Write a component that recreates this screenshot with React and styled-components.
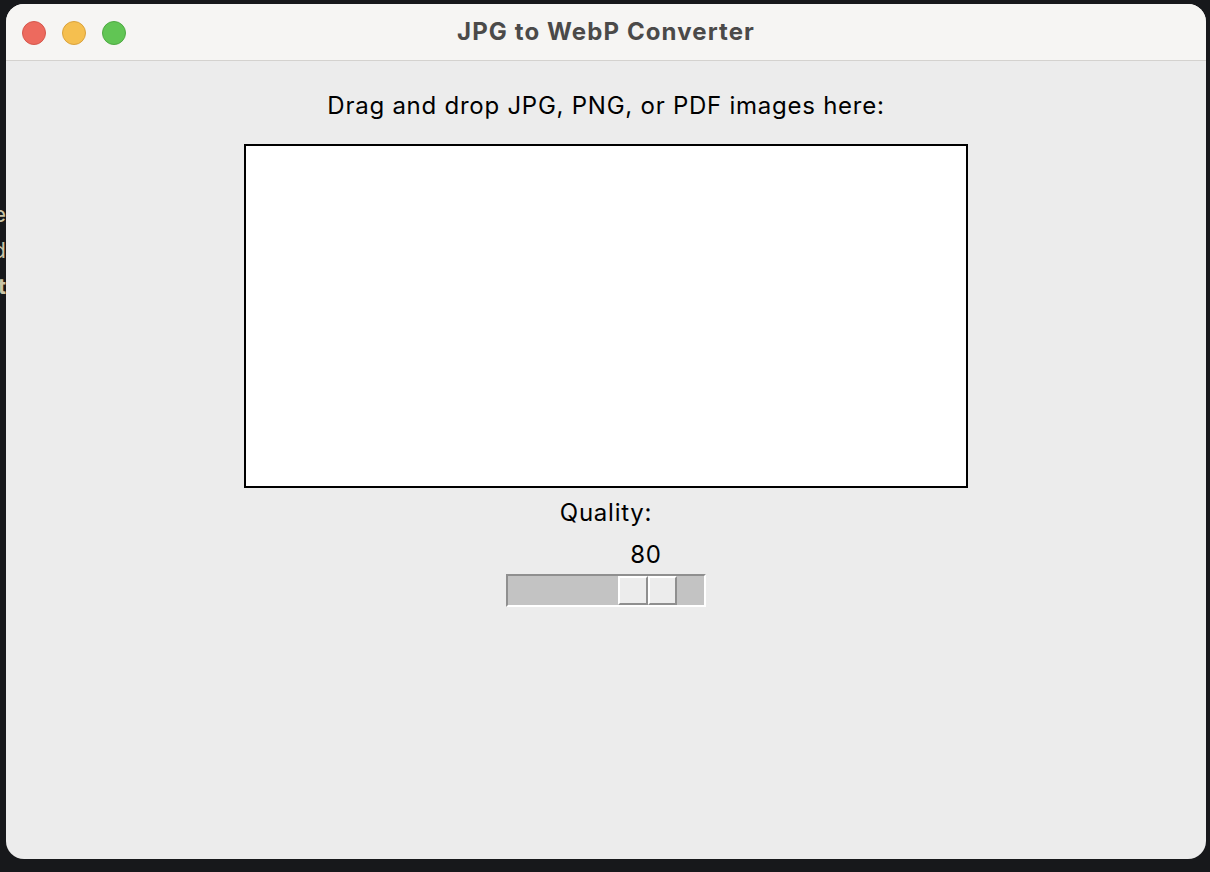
import React from 'react';
import styled, { createGlobalStyle } from 'styled-components';

const GlobalStyle = createGlobalStyle`
  html, body {
    margin: 0;
    padding: 0;
    background: #17181b;
    height: 100%;
    overflow: hidden;
  }
  #root {
    height: 100%;
  }
`;

const Desktop = styled.div`
  display: flex;
  height: 872px;
  width: 1210px;
  background: #17181b;
  font-family: Inter, "Liberation Sans", sans-serif;
`;

const EdgePeek = styled.div`
  width: ${p => p.width}px;
  overflow: hidden;
  display: flex;
  flex-direction: column;
  align-items: flex-end;
  padding-top: ${p => p.top}px;
  color: #cbc5a6;
  font-size: 22px;
  line-height: 36px;
  flex-shrink: 0;
`;

const PeekLine = styled.div`
  white-space: nowrap;
  font-weight: ${p => (p.bold ? 700 : 400)};
`;

const Window = styled.div`
  margin-top: 4px;
  width: 1200px;
  height: 855px;
  border-radius: 18px;
  overflow: hidden;
  display: flex;
  flex-direction: column;
  background: #ececec;
  flex-shrink: 0;
`;

const TitleBar = styled.div`
  height: 56px;
  background: #f6f5f3;
  border-bottom: 1px solid #d4d2cf;
  display: grid;
  grid-template-columns: 1fr auto 1fr;
  align-items: center;
  padding: 0 16px;
`;

const Lights = styled.div`
  display: flex;
  gap: 16px;
  margin-top: 1px;
`;

const Light = styled.span`
  box-sizing: border-box;
  width: 24px;
  height: 24px;
  border-radius: 50%;
  background: ${p => p.color};
  border: 1px solid ${p => p.edge};
`;

const Title = styled.div`
  font-size: 24px;
  font-weight: 700;
  color: #4b4a49;
  letter-spacing: 1.1px;
  margin-top: -2px;
`;

const Content = styled.div`
  flex: 1;
  display: flex;
  flex-direction: column;
  align-items: center;
  padding-top: 30px;
  color: #000;
`;

const Label = styled.div`
  font-size: 24px;
  line-height: 30px;
  letter-spacing: 0.75px;
  margin-top: ${p => p.gap || 0}px;
`;

const DropZone = styled.div`
  margin-top: 23px;
  width: 720px;
  height: 340px;
  background: #fff;
  border: 2px solid #000;
`;

const Scale = styled.div`
  margin-top: 12px;
  width: 200px;
  display: flex;
  flex-direction: column;
`;

const ScaleValue = styled.div`
  font-size: 24px;
  line-height: 30px;
  letter-spacing: 0.75px;
  width: 60px;
  text-align: center;
  margin-bottom: 4px;
`;

const Trough = styled.div`
  position: relative;
  height: 29px;
  background: #c3c3c3;
  border-top: 2px solid #8f8f8f;
  border-left: 2px solid #8f8f8f;
  border-bottom: 2px solid #fff;
  border-right: 2px solid #fff;
`;

const Thumb = styled.div`
  position: absolute;
  top: 0;
  width: 59px;
  height: 29px;
  display: flex;
`;

const ThumbHalf = styled.div`
  flex: 1;
  background: #ececec;
  border-top: 2px solid #fff;
  border-left: 2px solid #fff;
  border-bottom: 2px solid #8f8f8f;
  border-right: 2px solid #8f8f8f;
`;

const value = 80;
const troughInner = 196;
const thumbWidth = 59;
const thumbLeft = Math.round((value / 100) * (troughInner - thumbWidth));

export default function App() {
  return (
    <>
      <GlobalStyle />
      <Desktop>
        <EdgePeek width={6} top={196}>
          <PeekLine>ne</PeekLine>
          <PeekLine>nd</PeekLine>
          <PeekLine bold>st</PeekLine>
        </EdgePeek>
        <Window>
          <TitleBar>
            <Lights>
              <Light color="#ed6a5e" edge="#d5574c" />
              <Light color="#f5bf4f" edge="#d9a23c" />
              <Light color="#61c554" edge="#4fa943" />
            </Lights>
            <Title>JPG to WebP Converter</Title>
            <span />
          </TitleBar>
          <Content>
            <Label>Drag and drop JPG, PNG, or PDF images here:</Label>
            <DropZone />
            <Label gap={10}>Quality:</Label>
            <Scale>
              <ScaleValue style={{ marginLeft: thumbLeft }}>{value}</ScaleValue>
              <Trough>
                <Thumb style={{ left: thumbLeft }}>
                  <ThumbHalf />
                  <ThumbHalf />
                </Thumb>
              </Trough>
            </Scale>
          </Content>
        </Window>
      </Desktop>
    </>
  );
}
